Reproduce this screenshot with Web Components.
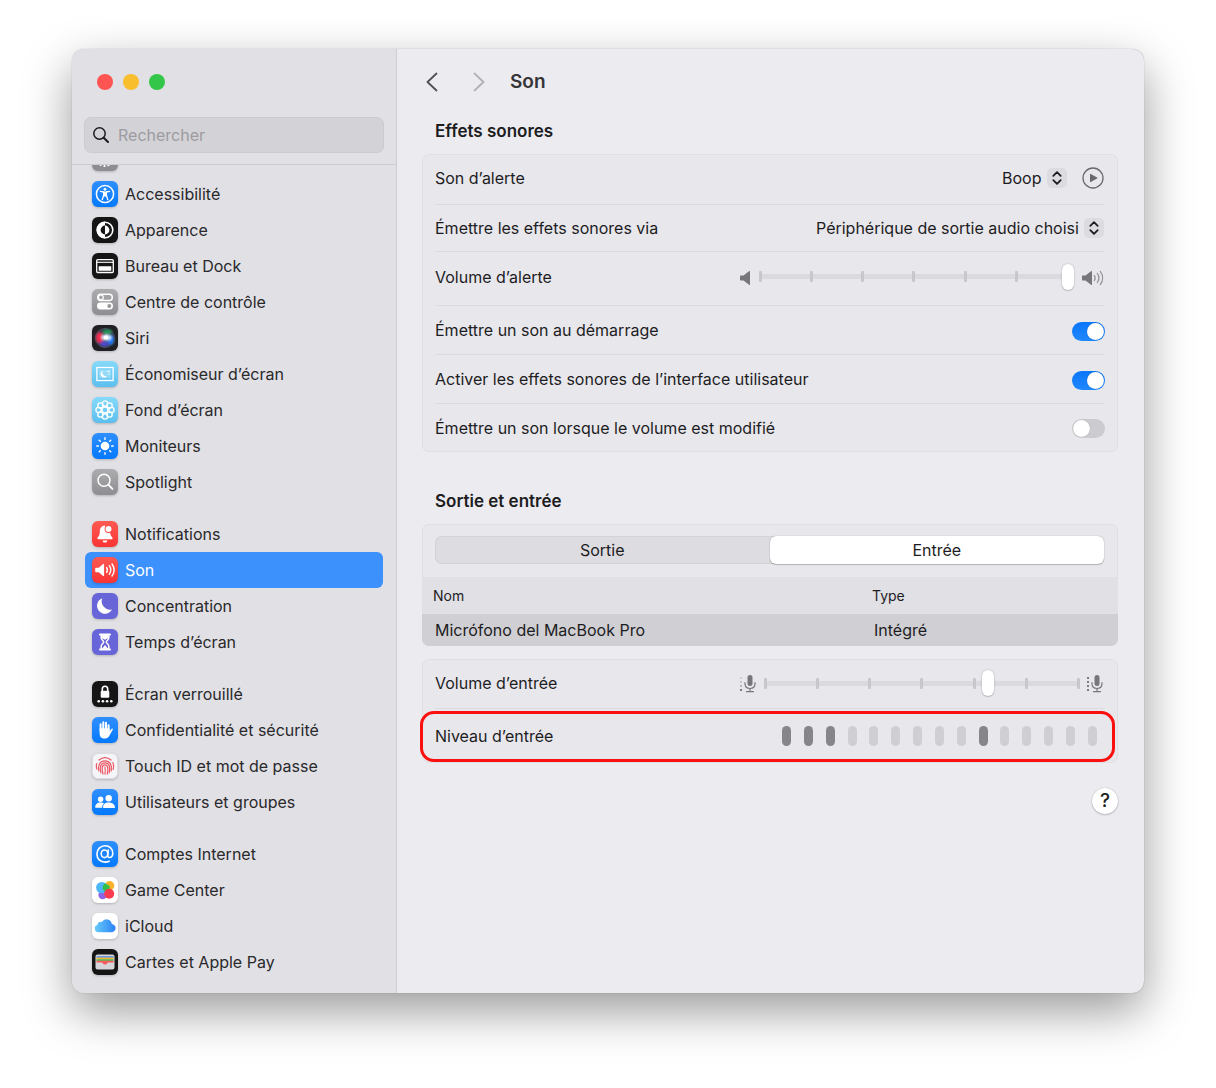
<!DOCTYPE html>
<html lang="fr">
<head>
<meta charset="utf-8">
<meta name="viewport" content="width=device-width, initial-scale=1">
<title>Son</title>
<style>
body{
    margin: 0;
    background: #fff;
    color: #1d1d1f;
    font-family: Inter, "Liberation Sans", sans-serif;
    font-size: 16px;
    line-height: 20px;
}
</style>
</head>
<body>
<mac-window>
    <side-bar slot="side">
        <side-group>
            <side-item icon="general">Général</side-item>
            <side-item icon="access">Accessibilité</side-item>
            <side-item icon="appearance">Apparence</side-item>
            <side-item icon="dock">Bureau et Dock</side-item>
            <side-item icon="control">Centre de contrôle</side-item>
            <side-item icon="siri">Siri</side-item>
            <side-item icon="saver">Économiseur d’écran</side-item>
            <side-item icon="wallpaper">Fond d’écran</side-item>
            <side-item icon="display">Moniteurs</side-item>
            <side-item icon="spotlight">Spotlight</side-item>
        </side-group>
        <side-group>
            <side-item icon="bell">Notifications</side-item>
            <side-item icon="sound" selected>Son</side-item>
            <side-item icon="focus">Concentration</side-item>
            <side-item icon="time">Temps d’écran</side-item>
        </side-group>
        <side-group>
            <side-item icon="lock">Écran verrouillé</side-item>
            <side-item icon="privacy">Confidentialité et sécurité</side-item>
            <side-item icon="touch">Touch ID et mot de passe</side-item>
            <side-item icon="users">Utilisateurs et groupes</side-item>
        </side-group>
        <side-group>
            <side-item icon="at">Comptes Internet</side-item>
            <side-item icon="game">Game Center</side-item>
            <side-item icon="cloud">iCloud</side-item>
            <side-item icon="wallet">Cartes et Apple Pay</side-item>
        </side-group>
    </side-bar>

    <tool-bar titulo="Son"></tool-bar>
    <set-section titulo="Effets sonores">
        <set-card>
            <select-row texto="Son d’alerte" valor="Boop" play alto="50px" pie="4px"></select-row>
            <select-row texto="Émettre les effets sonores via" valor="Périphérique de sortie audio choisi" alto="47px"></select-row>
            <slider-row texto="Volume d’alerte" valor="100" tipo="speaker" alto="54px" pie="4px"></slider-row>
            <toggle-row texto="Émettre un son au démarrage" checked></toggle-row>
            <toggle-row texto="Activer les effets sonores de l’interface utilisateur" checked></toggle-row>
            <toggle-row texto="Émettre un son lorsque le volume est modifié" alto="47px"></toggle-row>
        </set-card>
    </set-section>
    <set-section titulo="Sortie et entrée">
        <set-card>
            <seg-tabs></seg-tabs>
            <device-table></device-table>
        </set-card>
        <set-card>
            <slider-row texto="Volume d’entrée" valor="71" tipo="mic" pie="2px"></slider-row>
            <level-row texto="Niveau d’entrée" niveles="111000000100000" alto="53px"></level-row>
        </set-card>
    </set-section>
    <help-button></help-button>
</mac-window>

<script>
const ICONS = {
    general: `<rect width="26" height="26" rx="6" fill="#8e8e92"/>
        <circle cx="13" cy="13" r="6" fill="none" stroke="#fff" stroke-width="2"/>
        <circle cx="13" cy="13" r="8" fill="none" stroke="#fff" stroke-width="2" stroke-dasharray="2 2"/>`,
    access: `<rect width="26" height="26" rx="6" fill="url(#blue)"/>
        <circle cx="13" cy="13" r="8.6" fill="none" stroke="#fff" stroke-width="1.5"/>
        <circle cx="13" cy="8.3" r="1.4" fill="#fff"/>
        <path d="M8.4 10.3l3.3.7v3l-1.5 4.7M17.6 10.3l-3.3.7v3l1.5 4.7" fill="none" stroke="#fff" stroke-width="1.3" stroke-linecap="round" stroke-linejoin="round"/>
        <path d="M11.4 10.6h3.2v4.4l-1.6.8-1.6-.8z" fill="#fff"/>`,
    appearance: `<rect width="26" height="26" rx="6" fill="#151515"/>
        <circle cx="13" cy="13" r="7.8" fill="none" stroke="#fff" stroke-width="1.6"/>
        <path d="M13 4.6a8.4 8.4 0 0 0 0 16.8v-4a4.4 4.4 0 0 1 0-8.8z" fill="#fff"/>
        <path d="M13 8.6a4.4 4.4 0 0 1 0 8.8z" fill="#fff"/>`,
    dock: `<rect width="26" height="26" rx="6" fill="#151515"/>
        <rect x="4.7" y="6.7" width="16.6" height="12.8" rx="1" fill="none" stroke="#fff" stroke-width="1.3"/>
        <path d="M5 9.3h16" stroke="#fff" stroke-width="1.1"/>
        <rect x="6.7" y="13.2" width="12.6" height="4.6" rx=".5" fill="#fff"/>`,
    control: `<rect width="26" height="26" rx="6" fill="url(#gray)"/>
        <rect x="5.7" y="5.3" width="14.6" height="6.2" rx="3.1" fill="none" stroke="#fff" stroke-width="1.4"/>
        <circle cx="8.9" cy="8.4" r="2.4" fill="none" stroke="#fff" stroke-width="1.2"/>
        <rect x="5" y="13.6" width="16" height="6.8" rx="3.4" fill="#fff"/>
        <circle cx="17.3" cy="17" r="2" fill="#98989b"/>`,
    siri: `<rect width="26" height="26" rx="6" fill="#202024"/>
        <circle cx="13" cy="13" r="9.4" fill="#2c3c50"/>
        <g filter="url(#soft)">
        <ellipse cx="7.6" cy="12.6" rx="4" ry="5.6" fill="#f02c50"/>
        <ellipse cx="15.5" cy="6.8" rx="4.6" ry="2.2" fill="#1f9a52"/>
        <ellipse cx="19" cy="15" rx="3.2" ry="5" fill="#1c78f5"/>
        <ellipse cx="12.5" cy="18.8" rx="4.6" ry="2.6" fill="#4f49cf"/>
        <ellipse cx="14.5" cy="12.4" rx="5" ry="2.8" fill="#d3ecff"/>
        </g>
        <circle cx="14" cy="12.4" r="2.2" fill="#fff"/>
        <circle cx="13" cy="13" r="9.5" fill="none" stroke="#5c5c64" stroke-width=".7"/>`,
    saver: `<rect width="26" height="26" rx="6" fill="url(#sky)"/>
        <rect x="4.9" y="6.5" width="16.2" height="13" fill="none" stroke="#fff" stroke-width="1.3"/>
        <rect x="7" y="8.6" width="12" height="8.8" fill="#fff" opacity=".25"/>
        <path d="M11 9.6a3.6 3.6 0 1 0 4.3 5.2 3.5 3.5 0 0 1-4.3-5.2z" fill="#fff"/>
        <path d="M14.5 10.5h1M17 9.4v1.8M16 13h1.3" stroke="#fff" stroke-width="1.1"/>`,
    wallpaper: `<rect width="26" height="26" rx="6" fill="url(#sky)"/>
        <g fill="none" stroke="#fff" stroke-width="1.3">
        <circle cx="13" cy="13" r="3"/>
        <circle cx="13" cy="6.5" r="2.6"/><circle cx="17.6" cy="8.4" r="2.6"/>
        <circle cx="19.5" cy="13" r="2.6"/><circle cx="17.6" cy="17.6" r="2.6"/>
        <circle cx="13" cy="19.5" r="2.6"/><circle cx="8.4" cy="17.6" r="2.6"/>
        <circle cx="6.5" cy="13" r="2.6"/><circle cx="8.4" cy="8.4" r="2.6"/></g>`,
    display: `<rect width="26" height="26" rx="6" fill="url(#blue)"/>
        <circle cx="13" cy="13" r="4.3" fill="#fff"/>
        <path d="M13 4.8v1.6M13 19.6v1.6M4.8 13h1.6M19.6 13h1.6M7.2 7.2l1.1 1.1M17.7 17.7l1.1 1.1M18.8 7.2l-1.1 1.1M8.3 17.7l-1.1 1.1" stroke="#fff" stroke-width="1.4" stroke-linecap="round"/>`,
    spotlight: `<rect width="26" height="26" rx="6" fill="url(#gray)"/>
        <circle cx="12" cy="11.2" r="6" fill="none" stroke="#fff" stroke-width="1.4"/>
        <path d="M16.4 15.7l4 4.2" stroke="#fff" stroke-width="1.8" stroke-linecap="round"/>`,
    bell: `<rect width="26" height="26" rx="6" fill="url(#red)"/>
        <path d="M12.8 4.6c-3.4.3-4.9 2.7-5 6-.1 3.4-.7 4.3-2 5.6-.9.9-.5 2 .6 2h13.2c1.1 0 1.5-1.1.6-2-1-1-1.6-1.9-1.9-3.7z" fill="#fff"/>
        <path d="M10.6 19.4h4.8a2.4 2.2 0 0 1-4.8 0z" fill="#fff"/>
        <circle cx="16.5" cy="8" r="3.9" fill="#fb4a46"/>
        <circle cx="16.5" cy="8" r="3" fill="#fff"/>`,
    sound: `<rect width="26" height="26" rx="6" fill="url(#red)"/>
        <path d="M4 10.8h2.8l4.3-3.7c.5-.4 1-.2 1 .4v11c0 .6-.5.8-1 .4l-4.3-3.7H4c-.5 0-.8-.3-.8-.8v-2.8c0-.5.3-.8.8-.8z" fill="#fff"/>
        <path d="M14.6 10.5c1 1.5 1 3.5 0 5M17.3 8.7c1.8 2.6 1.8 6 0 8.6M20 7c2.6 3.6 2.6 8.4 0 12" fill="none" stroke="#fff" stroke-width="1.4" stroke-linecap="round"/>`,
    focus: `<rect width="26" height="26" rx="6" fill="#6865d8"/>
        <path d="M10.3 5.2a8 8 0 1 0 9.8 11.3A8.4 8.4 0 0 1 10.3 5.2z" fill="#fff"/>`,
    time: `<rect width="26" height="26" rx="6" fill="#6865d8"/>
        <path d="M8 5.6h10M8 20.4h10" stroke="#fff" stroke-width="2" stroke-linecap="round"/>
        <path d="M9.2 6v3c0 1.8 2.5 2.5 2.5 4s-2.5 2.2-2.5 4v3h7.6v-3c0-1.8-2.5-2.5-2.5-4s2.5-2.2 2.5-4V6" fill="none" stroke="#fff" stroke-width="1.5"/>
        <path d="M9.6 6h6.8v3L13 10.8 9.6 9zM10.2 19.5L13 16l2.8 3.5z" fill="#fff"/>`,
    lock: `<rect width="26" height="26" rx="6" fill="#151515"/>
        <rect x="8.7" y="9.8" width="8.6" height="7" rx="1.2" fill="#fff"/>
        <path d="M10.3 10.5V7.9a2.7 2.7 0 0 1 5.4 0v2.6" fill="none" stroke="#fff" stroke-width="1.6"/>
        <g fill="#fff"><circle cx="6.7" cy="20.3" r="1.3"/><circle cx="10.9" cy="20.3" r="1.3"/><circle cx="15.1" cy="20.3" r="1.3"/><circle cx="19.3" cy="20.3" r="1.3"/></g>`,
    privacy: `<rect width="26" height="26" rx="6" fill="url(#blue)"/>
        <path d="M8.6 13.5V7.2M11.3 12.5V5.2M14 12.5V5.7M16.6 13.5V8.3" stroke="#fff" stroke-width="2" stroke-linecap="round"/>
        <path d="M7.6 11.2h10v3l2-2.4c.9-.6 1.5.2 1.1 1l-3.6 6.4c-1.9 3-7.2 3-8.8.2-.7-1.4-.7-3.5-.7-5.3z" fill="#fff"/>`,
    touch: `<rect x=".5" y=".5" width="25" height="25" rx="5.5" fill="#f5f4f6" stroke="#dedde1"/>
        <g fill="none" stroke="#ee5967" stroke-width="1.2" stroke-linecap="round">
        <path d="M7 7a8.6 8.6 0 0 1 12 0M4.7 10.6a8.6 8.6 0 0 0 .2 5.5M20.8 9.5c1 2.2 1 4.8.2 7"/>
        <path d="M6.8 17.8c-1-6 1.2-10 6.200-10s7.2 4.2 6.2 10.200"/>
        <path d="M8.9 19.8c-1.6-6-.1-10 4.1-10s5.5 4 4.2 10"/>
        <path d="M11 21c-1.6-6-.9-9.1 2-9.1s3.5 3.5 2.3 9.200M13 14.2c.4 2.5.3 4.8 0 7"/></g>`,
    users: `<rect width="26" height="26" rx="6" fill="url(#blue)"/>
        <circle cx="8.6" cy="10.2" r="2.700" fill="#fff"/>
        <path d="M3.3 18.7c-.4-3.2 2-5.2 5.3-5.2 1.5 0 2.5.4 3.4 1-1.3 1.1-1.9 2.5-1.9 4.2z" fill="#fff"/>
        <circle cx="16.7" cy="9.3" r="3.2" fill="#fff"/>
        <path d="M11.2 18.9c-.7-3.6 1.9-5.5 5.5-5.5s6.5 2.2 6.2 5.5z" fill="#fff"/>`,
    at: `<rect width="26" height="26" rx="6" fill="url(#blue)"/>
        <g fill="none" stroke="#fff" stroke-width="1.6" stroke-linecap="round">
        <ellipse cx="12.5" cy="12.8" rx="3.3" ry="3.8"/>
        <path d="M16.3 9l-.6 5.5c-.2 3 4.8 2.8 5.1-1.7.2-5-3.3-8-7.7-8a8.100 8.100 0 0 0-8.200 8.200c0 5 3.500 8.100 8.200 8.100 1.600 0 3-.3 4.100-.8"/></g>`,
    game: `<rect width="26" height="26" rx="6" fill="#fff"/>
        <circle cx="17.6" cy="8.8" r="4.700" fill="#fbb22b"/>
        <circle cx="10.6" cy="18" r="4.200" fill="#8f63e6"/>
        <circle cx="9.8" cy="10.6" r="5.700" fill="#4fb6f5"/>
        <path d="M13.400 6.200a5.700 5.700 0 0 1 .6 9.100l-3.500-3.600c0-2.600 1-4.300 2.900-5.500z" fill="#31bf48"/>
        <circle cx="14.400" cy="10.800" r="3.300" fill="#31bf48"/>
        <circle cx="17.200" cy="16.700" r="5" fill="#fb3b4e"/>`,
    cloud: `<rect width="26" height="26" rx="6" fill="#fff"/>
        <path d="M6.5 19.3a3.9 3.9 0 0 1-1-7.6c.2-2.3 2.4-3.6 4.4-2.8a5.4 5.4 0 0 1 9.9 2c2.4.3 3.8 2 3.8 4.1 0 2.5-1.9 4.300-4.300 4.300z" fill="url(#cl)"/>`,
    wallet: `<rect width="26" height="26" rx="6" fill="#151515"/>
        <rect x="3.500" y="5.500" width="19" height="15" rx="2" fill="#d6d5d9"/>
        <path d="M4.500 7h17v2h-17z" fill="#6b9be0"/>
        <path d="M4.500 8.600h17v1.800h-17z" fill="#f6b52f"/>
        <path d="M4.500 10.200h17V12h-17z" fill="#56b958"/>
        <path d="M4.500 11.800h17v1.600h-5.300c-.8 0-1.100 2-3.200 2s-2.400-2-3.200-2H4.500z" fill="#f7585c"/>`
};

const DEFS = `<defs>
    <linearGradient id="blue" x2="0" y2="1"><stop stop-color="#2f8ffd"/><stop offset="1" stop-color="#0479fe"/></linearGradient>
    <linearGradient id="gray" x2="0" y2="1"><stop stop-color="#acacaf"/><stop offset="1" stop-color="#8e8e92"/></linearGradient>
    <linearGradient id="sky" x2="0" y2="1"><stop stop-color="#86dafa"/><stop offset="1" stop-color="#5bbfee"/></linearGradient>
    <linearGradient id="red" x2="0" y2="1"><stop stop-color="#fe5a52"/><stop offset="1" stop-color="#f93434"/></linearGradient>
    <linearGradient id="cl"><stop stop-color="#67cbf8"/><stop offset="1" stop-color="#2b82f7"/></linearGradient>
    <filter id="soft"><feGaussianBlur stdDeviation="1"/></filter>
</defs>`;

const SPEAKER = `<path d="M1 5.5h2.5L9 1.2c.6-.4 1-.2 1 .5v12.6c0 .7-.4.9-1 .5L3.5 10.5H1c-.6 0-1-.4-1-1v-3c0-.6.4-1 1-1z" fill="#77767a"/>`;
const MIC = `<rect x="7.5" y="0" width="5" height="11" rx="2.5" fill="#77767a"/>
    <path d="M5 7.5v1.3c0 2.9 2 4.7 5 4.7s5-1.8 5-4.7V7.5M10 13.5v3M6.5 16.7h7" fill="none" stroke="#77767a" stroke-width="1.2" stroke-linecap="round"/>`;

class MacWindow extends HTMLElement{
    constructor(){
        super();
        this.attachShadow({ mode: "open" });
    }
    connectedCallback(){
        this.shadowRoot.innerHTML = `
        <style>
        :host{
            display: block;
            box-sizing: border-box;
            min-height: 100vh;
            padding: 49px 72px 95px;
        }
        #box{
            display: flex;
            min-height: calc(100vh - 144px);
            border-radius: 12px;
            overflow: hidden;
            background: #ecebf0;
            box-shadow: 0 0 1px rgba(0,0,0,.4), 0 18px 48px rgba(0,0,0,.4);
        }
        main{
            flex: 1;
            min-width: 0;
            padding: 0 26px 32px 25px;
        }
        </style>
        <div id="box">
            <slot name="side"></slot>
            <main><slot></slot></main>
        </div>`;
    }
}
customElements.define("mac-window", MacWindow);

class SideBar extends HTMLElement{
    constructor(){
        super();
        this.attachShadow({ mode: "open" });
    }
    connectedCallback(){
        this.shadowRoot.innerHTML = `
        <style>
        :host{
            display: flex;
            flex-direction: column;
            box-sizing: border-box;
            width: 325px;
            flex-shrink: 0;
            background: #e1e0e5;
            border-right: 1px solid #cfced3;
        }
        header{
            display: flex;
            flex-direction: column;
            gap: 27px;
            padding: 25px 12px 11px;
            border-bottom: 1px solid #cccbd0;
        }
        .dots{
            display: flex;
            gap: 10px;
            padding-left: 13px;
        }
        .dots button{
            width: 16px;
            height: 16px;
            padding: 0;
            border: 0;
            border-radius: 50%;
        }
        .red{ background: #fe5452; }
        .yellow{ background: #f9be2e; }
        .green{ background: #34c648; }
        .search{
            display: flex;
            align-items: center;
            gap: 9px;
            height: 34px;
            padding: 0 8px;
            border: 1px solid #cccbd0;
            border-radius: 7px;
            background: #d3d2d7;
        }
        .search input{
            flex: 1;
            min-width: 0;
            padding: 0;
            border: 0;
            outline: 0;
            background: none;
            font: inherit;
            color: inherit;
        }
        .search input::placeholder{ color: #9c9ba0; }
        nav{
            flex: 1;
            overflow: hidden;
        }
        /* the list is scrolled: its first row goes under the header */
        #list{
            display: flex;
            flex-direction: column;
            gap: 16px;
            margin-top: -25px;
            padding-bottom: 12px;
        }
        </style>
        <header>
            <div class="dots">
                <button class="red" aria-label="Fermer"></button>
                <button class="yellow" aria-label="Réduire"></button>
                <button class="green" aria-label="Agrandir"></button>
            </div>
            <label class="search">
                <svg width="16" height="16" viewBox="0 0 16 16"><circle cx="6.5" cy="6.5" r="5.7" fill="none" stroke="#1d1d1f" stroke-width="1.5"/><path d="M10.7 10.7l4.3 4.3" stroke="#1d1d1f" stroke-width="2" stroke-linecap="round"/></svg>
                <input type="search" placeholder="Rechercher" aria-label="Rechercher">
            </label>
        </header>
        <nav><div id="list"><slot></slot></div></nav>`;
    }
}
customElements.define("side-bar", SideBar);

class SideGroup extends HTMLElement{
    constructor(){
        super();
        this.attachShadow({ mode: "open" });
        this.shadowRoot.innerHTML = `<style>:host{ display: block; }</style><slot></slot>`;
    }
}
customElements.define("side-group", SideGroup);

class SideItem extends HTMLElement{
    constructor(){
        super();
        this.attachShadow({ mode: "open" });
    }
    connectedCallback(){
        this.shadowRoot.innerHTML = `
        <style>
        :host{
            display: block;
            padding: 0 13px;
        }
        a{
            display: flex;
            align-items: center;
            gap: 7px;
            height: 36px;
            padding: 0 7px;
            border-radius: 6px;
            color: #29292b;
            text-decoration: none;
            white-space: nowrap;
        }
        :host([selected]) a{
            background: #3c91fd;
            color: #fff;
        }
        svg{
            flex-shrink: 0;
            filter: drop-shadow(0 1px 1px rgba(0,0,0,.2));
        }
        </style>
        <a href="#${this.getAttribute("icon")}">
            <svg width="26" height="26" viewBox="0 0 26 26" aria-hidden="true">${DEFS}${ICONS[this.getAttribute("icon")]}</svg>
            <span><slot></slot></span>
        </a>`;
    }
}
customElements.define("side-item", SideItem);

class ToolBar extends HTMLElement{
    constructor(){
        super();
        this.attachShadow({ mode: "open" });
    }
    connectedCallback(){
        this.shadowRoot.innerHTML = `
        <style>
        :host{
            display: flex;
            align-items: center;
            height: 66px;
        }
        button{
            display: flex;
            padding: 0;
            border: 0;
            background: none;
            margin: 0 35px 0 4px;
        }
        button + button{ margin: 0 25px 0 0; }
        h1{
            margin: 0;
            font-size: 19px;
            line-height: 24px;
            font-weight: 600;
            color: #353437;
        }
        </style>
        <button aria-label="Précédent"><svg width="12" height="20" viewBox="0 0 12 20"><path d="M10.5 1.5L1.5 10l9 8.5" fill="none" stroke="#504f53" stroke-width="1.8" stroke-linecap="round" stroke-linejoin="round"/></svg></button>
        <button aria-label="Suivant"><svg width="12" height="20" viewBox="0 0 12 20"><path d="M1.5 1.5l9 8.5-9 8.5" fill="none" stroke="#b1b0b5" stroke-width="1.8" stroke-linecap="round" stroke-linejoin="round"/></svg></button>
        <h1>${this.getAttribute("titulo")}</h1>`;
    }
}
customElements.define("tool-bar", ToolBar);

class SetSection extends HTMLElement{
    constructor(){
        super();
        this.attachShadow({ mode: "open" });
    }
    connectedCallback(){
        this.shadowRoot.innerHTML = `
        <style>
        :host{
            display: flex;
            flex-direction: column;
            gap: 13px;
            padding-top: 6px;
            margin-bottom: 33px;
        }
        :host(:last-of-type){ margin-bottom: 25px; }
        h2{
            margin: 0 13px;
            font-size: 17px;
            line-height: 20px;
            font-weight: 600;
        }
        </style>
        <h2>${this.getAttribute("titulo")}</h2>
        <slot></slot>`;
    }
}
customElements.define("set-section", SetSection);

class SetCard extends HTMLElement{
    constructor(){
        super();
        this.attachShadow({ mode: "open" });
        this.shadowRoot.innerHTML = `
        <style>
        :host{
            display: block;
            border: 1px solid #e0dfe4;
            border-radius: 7px;
            background: #e8e7ec;
        }
        </style>
        <slot></slot>`;
    }
}
customElements.define("set-card", SetCard);

// base of all rows: label on the left, control() on the right
class SetRow extends HTMLElement{
    constructor(){
        super();
        this.attachShadow({ mode: "open" });
    }
    css(){ return ""; }
    control(){ return ""; }
    connectedCallback(){
        this.shadowRoot.innerHTML = `
        <style>
        :host{
            display: flex;
            align-items: center;
            justify-content: space-between;
            gap: 16px;
            position: relative;
            box-sizing: border-box;
            min-height: ${this.getAttribute("alto") || "49px"};
            margin: 0 12px;
            padding-bottom: ${this.getAttribute("pie") || "0"};
            border-bottom: 1px solid #dcdbe0;
        }
        :host(:last-child){ border-bottom: 0; }
        .ctl{
            display: flex;
            align-items: center;
            padding-right: 1px;
        }
        ${this.css()}
        </style>
        <label for="c" id="l">${this.getAttribute("texto")}</label>
        <div class="ctl">${this.control()}</div>`;
    }
}

class SelectRow extends SetRow{
    css(){
        return `
        .pop{
            display: grid;
            align-items: center;
        }
        .pop > *{ grid-area: 1 / 1; }
        select{
            appearance: none;
            height: 24px;
            padding: 0 25px 0 0;
            border: 0;
            background: none;
            font: inherit;
            color: inherit;
        }
        .pop svg{
            justify-self: end;
            pointer-events: none;
        }
        button{
            display: flex;
            padding: 0;
            margin-left: 15px;
            border: 0;
            background: none;
        }`;
    }
    control(){
        const play = this.hasAttribute("play") ? `<button aria-label="Écouter"><svg width="22" height="22" viewBox="0 0 22 22"><circle cx="11" cy="11" r="10" fill="none" stroke="#6a696d" stroke-width="1.3"/><path d="M8 7.3v7.4c0 .5.4.6.7.4l6.4-3.6c.4-.2.4-.7 0-.9L8.7 6.9c-.3-.2-.7 0-.7.4z" fill="#6a696d"/></svg></button>` : "";
        return `<div class="pop">
            <select id="c"><option>${this.getAttribute("valor")}</option></select>
            <svg width="20" height="20" viewBox="0 0 20 20"><rect width="20" height="20" rx="5" fill="#dcdbe0"/><path d="M6.3 7.8L10 4.2l3.7 3.6M6.3 12.2l3.7 3.6 3.7-3.6" fill="none" stroke="#1d1d1f" stroke-width="1.8" stroke-linecap="round" stroke-linejoin="round"/></svg>
        </div>${play}`;
    }
}
customElements.define("select-row", SelectRow);

class SliderRow extends SetRow{
    css(){
        return `
        .ctl{
            width: 364px;
            gap: 2px;
        }
        .ctl > svg{
            flex-shrink: 0;
            margin-top: 2px;
        }
        .slide{
            flex: 1;
            display: grid;
            align-items: center;
        }
        .slide > *{ grid-area: 1 / 1; }
        .ticks{
            display: flex;
            justify-content: space-between;
            align-items: center;
            height: 5px;
            margin: 0 5px;
            border-radius: 2px;
            background: #dad9de;
        }
        .ticks i{
            width: 3px;
            height: 11px;
            border-radius: 1px;
            background: #c8c7cc;
        }
        input{
            appearance: none;
            width: 100%;
            height: 28px;
            margin: 0;
            background: none;
        }
        input::-webkit-slider-thumb{
            appearance: none;
            width: 12px;
            height: 26px;
            border-radius: 6px;
            background: #fff;
            box-shadow: 0 0 2px rgba(0,0,0,.25), 0 1px 1px rgba(0,0,0,.15);
        }`;
    }
    control(){
        let izq, der;
        if (this.getAttribute("tipo") == "speaker") {
            izq = `<svg width="12" height="16" viewBox="0 0 12 16">${SPEAKER}</svg>`;
            der = `<svg width="28" height="16" viewBox="-6 0 28 16">${SPEAKER}
                <path d="M12.3 5.5c1 1.5 1 3.500 0 5M15.3 3.5c2 2.7 2 6.3 0 9M18.3 1.5c3 3.9 3 9.1 0 13" fill="none" stroke="#8b8a8e" stroke-width="1.2" stroke-linecap="round"/></svg>`;
        } else {
            const puntos = (c) => c.map((f, i) => `<circle cx="1" cy="${3 + i * 4}" r="1" fill="${f}"/>`).join("");
            izq = `<svg width="17" height="18" viewBox="0 0 17 18">${MIC}${puntos(["#c9c8cd", "#bcbbbf", "#a8a7ab", "#5b5a5e"])}</svg>`;
            der = `<svg width="17" height="18" viewBox="0 0 17 18">${MIC}${puntos(["#5b5a5e", "#5b5a5e", "#5b5a5e", "#5b5a5e"])}</svg>`;
        }
        return `${izq}
        <div class="slide">
            <div class="ticks">${"<i></i>".repeat(7)}</div>
            <input id="c" type="range" min="0" max="100" value="${this.getAttribute("valor")}">
        </div>
        ${der}`;
    }
}
customElements.define("slider-row", SliderRow);

class ToggleRow extends SetRow{
    css(){
        return `
        .ctl{ padding-right: 0; }
        input{
            appearance: none;
            display: flex;
            width: 33px;
            height: 19px;
            margin: 2px 0 0;
            padding: 1px;
            box-sizing: border-box;
            border-radius: 10px;
            background: #cccbd0;
        }
        input::before{
            content: "";
            width: 17px;
            height: 17px;
            border-radius: 50%;
            background: #fff;
            box-shadow: 0 0 1px rgba(0,0,0,.3);
        }
        input:checked{
            justify-content: flex-end;
            background: linear-gradient(#0a76f8, #1f88fe);
        }`;
    }
    control(){
        return `<input id="c" type="checkbox" role="switch" ${this.hasAttribute("checked") ? "checked" : ""}>`;
    }
}
customElements.define("toggle-row", ToggleRow);

class LevelRow extends SetRow{
    css(){
        return `
        /* red frame laid over the row */
        :host::after{
            content: "";
            position: absolute;
            inset: 2px -10px 0 -15px;
            border: 3px solid #f9100f;
            border-radius: 14px;
            pointer-events: none;
        }
        .ctl{ padding-right: 8px; }
        #c{
            display: flex;
            justify-content: space-between;
            width: 315px;
        }
        #c i{
            width: 9px;
            height: 20px;
            border-radius: 5px;
            background: #cfced3;
        }
        #c i.on{ background: #868589; }`;
    }
    control(){
        const n = this.getAttribute("niveles").split("");
        return `<div id="c" role="meter" aria-labelledby="l" aria-valuemin="0" aria-valuemax="15" aria-valuenow="3">${n.map((v) => `<i class="${v == "1" ? "on" : ""}"></i>`).join("")}</div>`;
    }
}
customElements.define("level-row", LevelRow);

class SegTabs extends HTMLElement{
    constructor(){
        super();
        this.attachShadow({ mode: "open" });
    }
    connectedCallback(){
        this.shadowRoot.innerHTML = `
        <style>
        :host{
            display: flex;
            box-sizing: border-box;
            height: 28px;
            margin: 11px 13px 13px 12px;
            border-radius: 7px;
            background: #dddce1;
            box-shadow: inset 0 0 0 1px #d3d2d7;
        }
        button{
            flex: 1;
            padding: 0;
            border: 0;
            border-radius: 6px;
            background: none;
            font: inherit;
            color: inherit;
        }
        button[aria-selected="true"]{
            background: #fff;
            box-shadow: 0 0 1px rgba(0,0,0,.4), 0 1px 1px rgba(0,0,0,.2);
        }
        </style>
        <button role="tab" aria-selected="false">Sortie</button>
        <button role="tab" aria-selected="true">Entrée</button>`;
        this.setAttribute("role", "tablist");
    }
}
customElements.define("seg-tabs", SegTabs);

class DeviceTable extends HTMLElement{
    constructor(){
        super();
        this.attachShadow({ mode: "open" });
    }
    connectedCallback(){
        this.shadowRoot.innerHTML = `
        <style>
        :host{
            display: block;
            margin: 0 -1px -1px;
            border-radius: 0 0 7px 7px;
            overflow: hidden;
        }
        table{
            width: 100%;
            border-collapse: collapse;
            table-layout: fixed;
            text-align: left;
        }
        th{
            height: 37px;
            padding: 0 11px;
            background: #e1e0e5;
            font-size: 14px;
            font-weight: 400;
        }
        th:first-child{ width: 417px; }
        td{
            height: 32px;
            padding: 0 13px;
            background: #d0cfd4;
        }
        </style>
        <table>
            <thead><tr><th>Nom</th><th>Type</th></tr></thead>
            <tbody><tr><td>Micrófono del MacBook Pro</td><td>Intégré</td></tr></tbody>
        </table>`;
    }
}
customElements.define("device-table", DeviceTable);

class HelpButton extends HTMLElement{
    constructor(){
        super();
        this.attachShadow({ mode: "open" });
        this.shadowRoot.innerHTML = `
        <style>
        :host{
            display: flex;
            justify-content: flex-end;
        }
        button{
            width: 26px;
            height: 26px;
            padding: 0;
            border: 0;
            border-radius: 50%;
            background: #fff;
            font: inherit;
            font-size: 19px;
            font-weight: 500;
            color: #1d1d1f;
            box-shadow: 0 0 1px rgba(0,0,0,.3), 0 1px 2px rgba(0,0,0,.2);
        }
        </style>
        <button>?</button>`;
    }
}
customElements.define("help-button", HelpButton);
</script>
</body>
</html>
